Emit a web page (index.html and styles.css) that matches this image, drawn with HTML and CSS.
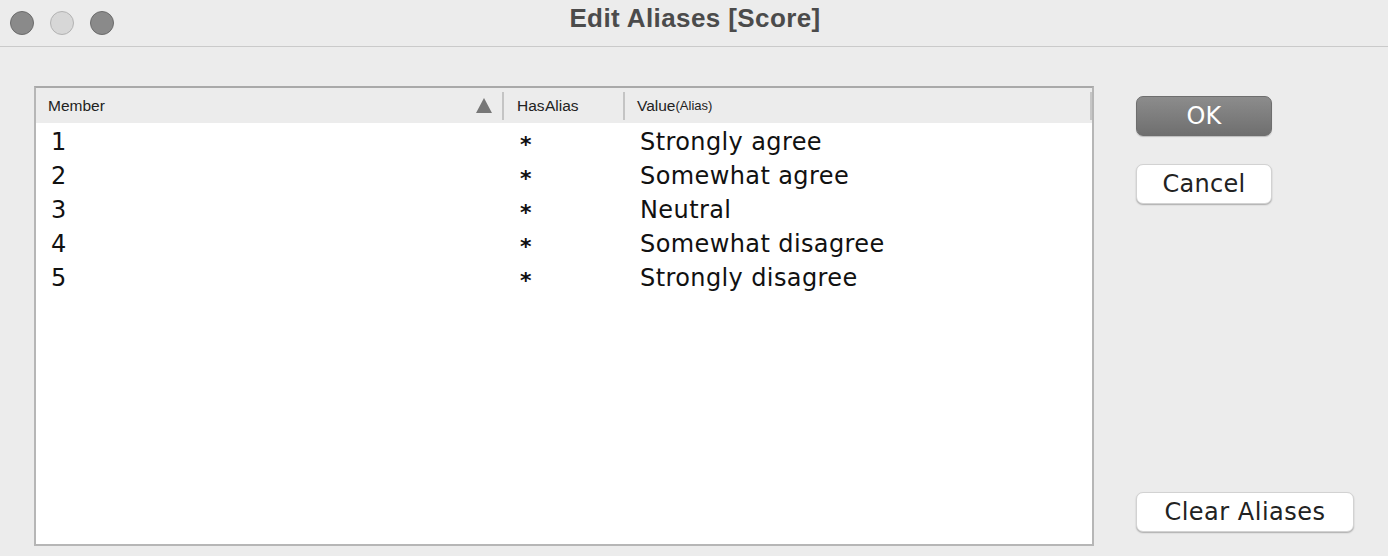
FILE: index.html
```html
<!DOCTYPE html>
<html>
<head>
<meta charset="utf-8">
<title>Edit Aliases [Score]</title>
<link rel="stylesheet" href="styles.css">
</head>
<body>
<div class="window">
  <header class="titlebar">
    <div class="lights">
      <span class="light dark"></span>
      <span class="light pale"></span>
      <span class="light dark"></span>
    </div>
    <h1 class="title">Edit Aliases [Score]</h1>
  </header>
  <main class="content">
    <section class="table">
      <div class="thead">
        <div class="th th-member">Member<span class="sort"></span></div>
        <div class="sep"></div>
        <div class="th th-has">Has Alias</div>
        <div class="sep"></div>
        <div class="th th-value">Value<span class="small">(Alias)</span></div>
        <div class="gutter"></div>
      </div>
      <div class="tbody">
        <div class="row"><span class="c1">1</span><span class="c2">*</span><span class="c3">Strongly agree</span></div>
        <div class="row"><span class="c1">2</span><span class="c2">*</span><span class="c3">Somewhat agree</span></div>
        <div class="row"><span class="c1">3</span><span class="c2">*</span><span class="c3">Neutral</span></div>
        <div class="row"><span class="c1">4</span><span class="c2">*</span><span class="c3">Somewhat disagree</span></div>
        <div class="row"><span class="c1">5</span><span class="c2">*</span><span class="c3">Strongly disagree</span></div>
      </div>
    </section>
    <aside class="buttons">
      <button class="btn primary">OK</button>
      <button class="btn">Cancel</button>
      <div class="spacer"></div>
      <button class="btn wide">Clear Aliases</button>
    </aside>
  </main>
</div>
</body>
</html>
```

FILE: styles.css
```css
html, body {
  margin: 0;
  padding: 0;
  background: #ececec;
}
.window {
  width: 1388px;
  height: 556px;
  background: #ececec;
  overflow: hidden;
}
.titlebar {
  height: 46px;
  border-bottom: 1px solid #cacaca;
  display: flex;
  align-items: center;
  position: relative;
}
.lights {
  display: flex;
  gap: 16px;
  padding-left: 10px;
  margin-top: -1px;
}
.light {
  width: 22px;
  height: 22px;
  border-radius: 50%;
  display: block;
}
.light.dark {
  background: #8a8a8a;
  border: 1px solid #6c6c6c;
}
.light.pale {
  background: #d7d7d7;
  border: 1px solid #b3b3b3;
}
.title {
  position: absolute;
  left: 0;
  right: 0;
  top: 0;
  margin: 0;
  text-align: center;
  font-family: "Liberation Sans", Arial, sans-serif;
  font-weight: bold;
  font-size: 26px;
  letter-spacing: 0.4px;
  line-height: 36px;
  color: #4b4b4b;
  padding-left: 2px;
}
.content {
  display: flex;
  padding: 39px 0 0 34px;
  gap: 42px;
}
.table {
  width: 1056px;
  height: 456px;
  border: 2px solid #b6b6b6;
  border-top-color: #a9a9a9;
  background: #fff;
  display: flex;
  flex-direction: column;
}
.thead {
  height: 35px;
  background: #ececec;
  display: flex;
  align-items: center;
  font-family: "Liberation Sans", Arial, sans-serif;
  font-size: 15.5px;
  color: #222;
}
.th {
  height: 35px;
  display: flex;
  align-items: center;
  padding-left: 12px;
  box-sizing: border-box;
}
.th-member {
  width: 466px;
  justify-content: space-between;
  padding-right: 10px;
}
.th-has {
  width: 119px;
  padding-left: 13px;
  word-spacing: -3px;
}
.th-value {
  flex: 1;
}
.small {
  font-size: 13px;
}
.sep {
  width: 2px;
  height: 28px;
  background: #c4c4c4;
}
.gutter {
  width: 2px;
  height: 28px;
  background: #c6c6c6;
}
.sort {
  width: 0;
  height: 0;
  border-left: 8px solid transparent;
  border-right: 8px solid transparent;
  border-bottom: 15px solid #777;
  margin-top: -1px;
}
.tbody {
  flex: 1;
  padding-top: 2px;
  font-family: "DejaVu Sans", sans-serif;
  font-size: 24px;
  letter-spacing: 0.4px;
  color: #111;
}
.row {
  height: 34px;
  display: flex;
  align-items: center;
}
.c1 {
  width: 468px;
  padding-left: 15px;
  box-sizing: border-box;
}
.c2 {
  width: 120px;
  padding-left: 16px;
  padding-top: 4px;
  box-sizing: border-box;
  font-weight: bold;
  font-size: 22px;
}
.c3 {
  padding-left: 16px;
}
.buttons {
  display: flex;
  flex-direction: column;
  align-items: flex-start;
  width: 218px;
  height: 460px;
  padding-top: 10px;
  box-sizing: border-box;
}
.btn {
  width: 136px;
  height: 40px;
  border-radius: 7px;
  border: 1px solid #d2d2d2;
  background: #fff;
  box-shadow: 0 1px 1.5px rgba(0, 0, 0, 0.28);
  font-family: "DejaVu Sans", sans-serif;
  font-size: 24px;
  letter-spacing: 0.3px;
  color: #222;
  padding: 0;
  line-height: 36px;
  margin-bottom: 28px;
}
.btn.primary {
  background: linear-gradient(#8c8c8c, #6f6f6f);
  border-color: #6e6e6e;
  color: #fff;
  box-shadow: 0 1px 1px rgba(0, 0, 0, 0.2);
}
.spacer {
  flex: 1;
}
.btn.wide {
  width: 218px;
  letter-spacing: 0.5px;
  margin-bottom: 14px;
}
```
